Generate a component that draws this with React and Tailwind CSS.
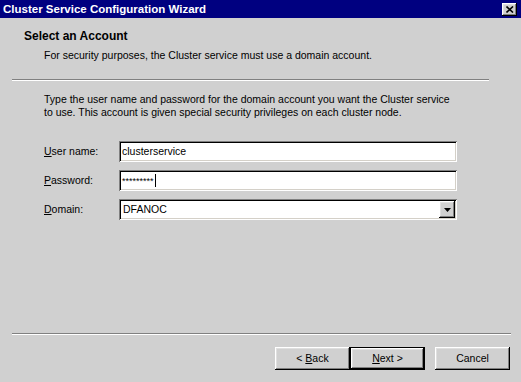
import React from 'react';

const raised =
  'shadow-[inset_-1px_-1px_0_#000000,inset_1px_1px_0_#ffffff,inset_-2px_-2px_0_#808080,inset_2px_2px_0_#dfdfdf]';
const sunken =
  'shadow-[inset_1px_1px_0_#808080,inset_-1px_-1px_0_#ffffff,inset_2px_2px_0_#000000,inset_-2px_-2px_0_#d4d0c8]';

const Field = ({ label, mnemonic, children }) => (
  <div className="flex items-center h-[21px]">
    <div className="w-[75px]">
      <span className="underline underline-offset-[1px]">{mnemonic}</span>
      {label}
    </div>
    {children}
  </div>
);

const Button = ({ children, isDefault }) => (
  <button
    className={
      'w-[75px] h-[23px] bg-[#d0d0d0] text-black text-[10.5px] flex items-center justify-center ' +
      (isDefault ? 'border border-black ' : '') +
      raised
    }
  >
    {children}
  </button>
);

export default function App() {
  return (
    <div
      className="w-[521px] h-[382px] bg-[#d0d0d0] flex flex-col text-[10.5px] leading-[13px] text-black overflow-hidden"
      style={{ fontFamily: '"Liberation Sans", Arial, sans-serif' }}
    >
      {/* Title bar */}
      <div className="h-[18px] bg-[#000080] flex items-center justify-between pl-[3px] pr-[4px]">
        <span className="text-white font-bold text-[11.5px]">Cluster Service Configuration Wizard</span>
        <div className={'w-[15px] h-[13px] bg-[#d0d0d0] flex items-center justify-center ' + raised}>
          <svg width="8" height="7" viewBox="0 0 8 7">
            <path d="M0.5 0.5 L7 6.5 M7 0.5 L0.5 6.5" stroke="#000" strokeWidth="1.6" />
          </svg>
        </div>
      </div>

      {/* Header */}
      <div className="pt-[12px] pl-[24px]">
        <div className="font-bold text-[12px]">Select an Account</div>
        <div className="pl-[20px] mt-[6px]">
          For security purposes, the Cluster service must use a domain account.
        </div>
      </div>
      <div className="ml-[12px] w-[477px] mt-[17px] border-t border-t-[#808080] border-b border-b-white" />

      {/* Body */}
      <div className="pl-[44px] pt-[12px] pr-[40px]">
        <p>Type the user name and password for the domain account you want the Cluster service</p>
        <p>to use. This account is given special security privileges on each cluster node.</p>
      </div>

      <div className="pl-[44px] mt-[22px] flex flex-col gap-[8px]">
        <Field label="ser name:" mnemonic="U">
          <div className={'w-[338px] h-[21px] bg-white flex items-center pl-[3px] ' + sunken}>
            clusterservice
          </div>
        </Field>
        <Field label="assword:" mnemonic="P">
          <div className={'w-[338px] h-[21px] bg-white flex items-center pl-[3px] ' + sunken}>
            <span className="text-[9px] leading-none pt-[2px]">*********</span>
            <span className="w-px h-[13px] bg-black ml-[1px]" />
          </div>
        </Field>
        <Field label="omain:" mnemonic="D">
          <div className={'w-[338px] h-[21px] bg-white flex items-center justify-between pl-[4px] pr-[2px] ' + sunken}>
            <span>DFANOC</span>
            <div className={'w-[16px] h-[17px] bg-[#d0d0d0] flex items-center justify-center ' + raised}>
              <svg width="7" height="4" viewBox="0 0 7 4">
                <path d="M0 0 H7 L3.5 4 Z" fill="#000" />
              </svg>
            </div>
          </div>
        </Field>
      </div>

      <div className="flex-1" />

      {/* Footer */}
      <div className="ml-[12px] w-[499px] border-t border-t-[#808080] border-b border-b-white" />
      <div className="flex justify-end pr-[11px] pt-[12px] pb-[12px]">
        <Button>
          &lt;&nbsp;<span className="underline underline-offset-[1px]">B</span>ack
        </Button>
        <Button isDefault>
          <span className="underline underline-offset-[1px]">N</span>ext&nbsp;&gt;
        </Button>
        <div className="w-[10px]" />
        <Button>Cancel</Button>
      </div>
    </div>
  );
}
